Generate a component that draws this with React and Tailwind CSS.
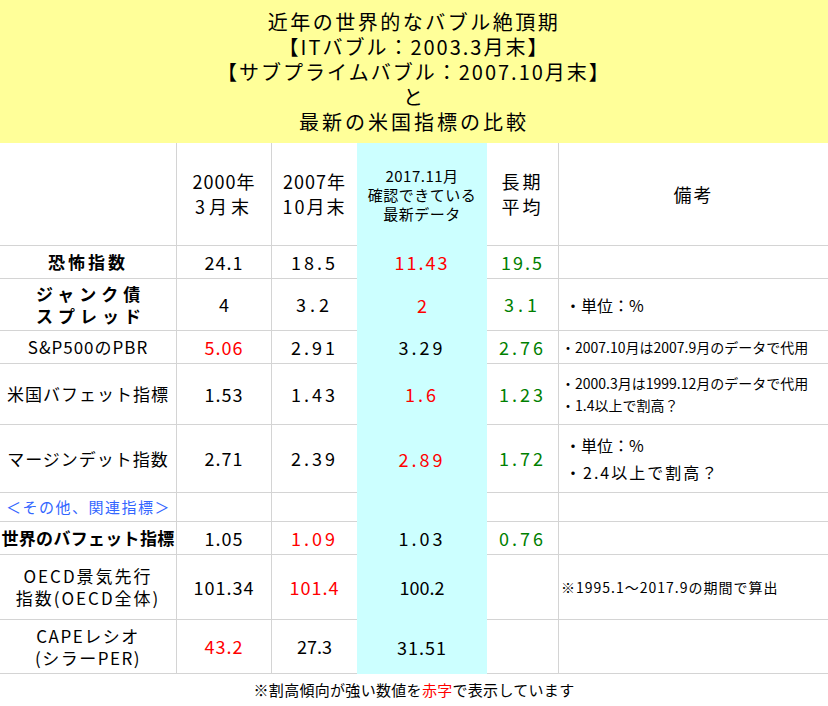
import React from 'react';

const RED = 'text-[#ff0000]';
const GREEN = 'text-[#008000]';

// columns: label | 2000 | 2007 | latest (cyan) | avg | note
const rows = [
  {
    h: 'h-[33px]',
    label: <span className="font-bold text-[17px] tracking-[3px]">恐怖指数</span>,
    a: ['24.1', '', 'tracking-[1px]'], b: ['18.5', '', 'tracking-[3px]'], c: ['11.43', RED, 'tracking-[2px]'], d: ['19.5', GREEN, 'tracking-[2px]'],
    note: null,
  },
  {
    h: 'h-[52px]',
    label: (
      <span className="font-bold text-[17px] tracking-[5px] leading-[22px] text-left block pl-[36px] w-full">
        ジャンク債<br />スプレッド
      </span>
    ),
    a: ['4', ''], b: ['3.2', '', 'tracking-[4px]'], c: ['2', RED], d: ['3.1', GREEN, 'tracking-[4px]'],
    note: <span className="text-[16px] pl-[4px]">・単位：%</span>,
  },
  {
    h: 'h-[33px]',
    label: <span className="text-[17px] tracking-[1px]">S&amp;P500のPBR</span>,
    a: ['5.06', RED, 'tracking-[1px]'], b: ['2.91', '', 'tracking-[3px]'], c: ['3.29', '', 'tracking-[3px]'], d: ['2.76', GREEN, 'tracking-[3px]'],
    note: <span className="text-[14px]">・2007.10月は2007.9月のデータで代用</span>,
  },
  {
    h: 'h-[61px]',
    label: <span className="text-[17px] tracking-[1px]">米国バフェット指標</span>,
    a: ['1.53', '', 'tracking-[1px]'], b: ['1.43', '', 'tracking-[3px]'], c: ['1.6', RED, 'tracking-[3px]'], d: ['1.23', GREEN, 'tracking-[3px]'],
    note: (
      <span className="text-[14px] leading-[22px] block">
        ・2000.3月は1999.12月のデータで代用<br />・1.4以上で割高？
      </span>
    ),
  },
  {
    h: 'h-[68px]',
    label: <span className="text-[17px] tracking-[1px]">マージンデット指数</span>,
    a: ['2.71', '', 'tracking-[1px]'], b: ['2.39', '', 'tracking-[3px]'], c: ['2.89', RED, 'tracking-[3px]'], d: ['1.72', GREEN, 'tracking-[3px]'],
    note: (
      <span className="text-[16px] leading-[27px] block pl-[4px]">
        ・単位：%<br /><span className="tracking-[2px]">・2.4以上で割高？</span>
      </span>
    ),
  },
  {
    h: 'h-[29px]',
    label: (
      <span className="text-[15px] text-[#3366ff] text-left block w-full pl-[6px] tracking-[1.5px] whitespace-nowrap">
        ＜その他、関連指標＞
      </span>
    ),
    a: ['', ''], b: ['', ''], c: ['', ''], d: ['', ''],
    note: null,
  },
  {
    h: 'h-[33px]',
    label: <span className="font-bold text-[17px] tracking-[0.3px] whitespace-nowrap">世界のバフェット指標</span>,
    a: ['1.05', '', 'tracking-[1px]'], b: ['1.09', RED, 'tracking-[3px]'], c: ['1.03', '', 'tracking-[3px]'], d: ['0.76', GREEN, 'tracking-[3px]'],
    note: null,
  },
  {
    h: 'h-[65px]',
    label: (
      <span className="text-[17px] leading-[22px] tracking-[2px] whitespace-nowrap">
        OECD景気先行<br />指数(OECD全体)
      </span>
    ),
    a: ['101.34', '', 'tracking-[1px]'], b: ['101.4', RED, 'tracking-[1px]'], c: ['100.2', ''], d: ['', ''],
    note: <span className="text-[14px] tracking-[1px]">※1995.1～2017.9の期間で算出</span>,
  },
  {
    h: 'h-[54px]',
    label: (
      <span className="text-[17px] leading-[22px] tracking-[1.5px]">
        CAPEレシオ<br />(シラーPER)
      </span>
    ),
    a: ['43.2', RED, 'tracking-[1px]'], b: ['27.3', ''], c: ['31.51', '', 'tracking-[1px]'], d: ['', ''],
    note: null,
  },
];

function Num({ v }) {
  const [text, color, track] = v;
  return <span className={`text-[18px] ${color || 'text-black'} ${track || ''}`}>{text}</span>;
}

export default function App() {
  return (
    <div className="w-[828px] h-[706px] bg-white text-black font-['Noto_Sans_CJK_JP','Noto_Sans',sans-serif] overflow-hidden">
      {/* Title */}
      <div className="h-[143px] bg-[#ffff99] flex flex-col items-center pt-[9px] text-[20px] leading-[25px] tracking-[2px]">
        <div className="tracking-[2.5px]">近年の世界的なバブル絶頂期</div>
        <div>【ITバブル：2003.3月末】</div>
        <div>【サブプライムバブル：2007.10月末】</div>
        <div>と</div>
        <div className="tracking-[3px]">最新の米国指標の比較</div>
      </div>

      {/* Table */}
      <div className="grid grid-cols-[177px_95px_85px_130px_72px_269px]">
        {/* header row */}
        <div className="h-[103px] border-b border-r border-[#d4d4d4]" />
        <div className="h-[103px] border-b border-r border-[#d4d4d4] flex items-center justify-center text-center text-[18px] leading-[25px]">
          <span className="tracking-[1px]">2000年<br /><span className="tracking-[4px]">3月末</span></span>
        </div>
        <div className="h-[103px] border-b border-[#d4d4d4] flex items-center justify-center text-center text-[18px] leading-[25px]">
          <span className="tracking-[1px]">2007年<br /><span className="tracking-[2px]">10月末</span></span>
        </div>
        <div className="h-[103px] bg-[#ccffff] flex items-center justify-center text-center text-[15px] leading-[19px] tracking-[0.5px]">
          <span>2017.11月<br />確認できている<br />最新データ</span>
        </div>
        <div className="h-[103px] border-b border-r border-[#d4d4d4] flex items-center justify-center text-center text-[18px] leading-[25px]">
          <span className="tracking-[3px]">長期<br />平均</span>
        </div>
        <div className="h-[103px] border-b border-[#d4d4d4] flex items-center justify-center text-[18px]">
          <span className="tracking-[2px]">備考</span>
        </div>

        {rows.map((r, i) => (
          <React.Fragment key={i}>
            <div className={`${r.h} border-b border-r border-[#d4d4d4] flex items-center justify-center text-center`}>
              {r.label}
            </div>
            <div className={`${r.h} border-b border-r border-[#d4d4d4] flex items-center justify-center`}>
              <Num v={r.a} />
            </div>
            <div className={`${r.h} border-b border-[#d4d4d4] flex items-center justify-center`}>
              <Num v={r.b} />
            </div>
            <div className={`${r.h} bg-[#ccffff] flex items-center justify-center`}>
              <Num v={r.c} />
            </div>
            <div className={`${r.h} border-b border-r border-[#d4d4d4] flex items-center justify-center`}>
              <Num v={r.d} />
            </div>
            <div className={`${r.h} border-b border-[#d4d4d4] flex items-center pl-[2px] whitespace-nowrap`}>
              {r.note}
            </div>
          </React.Fragment>
        ))}
      </div>

      {/* Footer */}
      <div className="h-[32px] flex items-center justify-center text-[15px] tracking-[0.3px]">
        <span>
          ※割高傾向が強い数値を<span className={RED}>赤字</span>で表示しています
        </span>
      </div>
    </div>
  );
}
